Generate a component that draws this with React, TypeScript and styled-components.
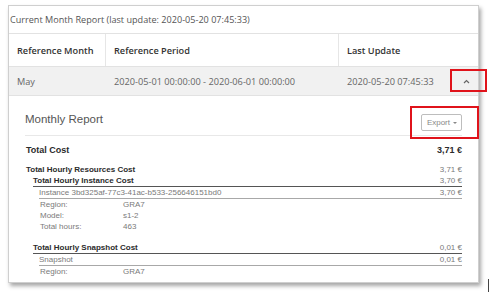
import React from 'react';
import styled, { createGlobalStyle } from 'styled-components';

const GlobalStyle = createGlobalStyle`
    html, body {
        margin: 0;
        padding: 0;
        background: #ffffff;
    }
`;

const Page = styled.div`
    position: relative;
    width: 500px;
    height: 292px;
    padding: 5px 0 0 8px;
    box-sizing: border-box;
    overflow: hidden;
`;

const Panel = styled.section`
    width: 471px;
    height: 278px;
    box-sizing: border-box;
    border: 1px solid #cfcfcf;
    background: #ffffff;
    box-shadow: 2px 3px 4px rgba(0, 0, 0, 0.35);
    display: flex;
    flex-direction: column;
    font-family: 'Open Sans', 'Liberation Sans', sans-serif;
`;

const PanelTitle = styled.div`
    height: 27px;
    display: flex;
    align-items: center;
    padding-left: 1px;
    font-size: 9.1px;
    color: #555;
    white-space: nowrap;
    border-bottom: 1px solid #e2e2e2;
`;

const Row = styled.div<{ shaded?: boolean; head?: boolean }>`
    display: grid;
    grid-template-columns: 97px 233px 1fr 30px;
    height: ${({ head }) => (head ? '32px' : '28px')};
    background: ${({ shaded }) => (shaded ? '#f1f1f1' : '#ffffff')};
    border-bottom: 1px solid #e2e2e2;
    font-size: 9.2px;
    white-space: nowrap;
    color: ${({ head }) => (head ? '#333' : '#666')};
    font-weight: ${({ head }) => (head ? 600 : 400)};
`;

const Cell = styled.div<{ divider?: boolean }>`
    display: flex;
    align-items: center;
    padding-left: 8px;
    border-right: ${({ divider }) => (divider ? '1px solid #e6e6e6' : 'none')};
`;

const CaretCell = styled.div`
    display: flex;
    align-items: center;
    justify-content: center;
    padding-left: 6px;
`;

const Report = styled.div`
    padding: 0 16px;
    font-family: 'Liberation Sans', Arial, sans-serif;
    display: flex;
    flex-direction: column;
`;

const ReportHeader = styled.div`
    display: flex;
    align-items: center;
    justify-content: space-between;
    padding: 12px 0 6px;
    border-bottom: 1px solid #e8e8e8;
`;

const ReportTitle = styled.h4`
    margin: 0;
    font-size: 11.5px;
    line-height: 20px;
    font-weight: 400;
    color: #555;
`;

const ExportButton = styled.button`
    margin-top: 6px;
    margin-bottom: -2px;
    height: 17px;
    padding: 0 4px 0 5px;
    border: 1px solid #bdbdbd;
    border-radius: 2px;
    background: #fff;
    font-family: 'Liberation Sans', Arial, sans-serif;
    font-size: 8px;
    color: #888;
    display: flex;
    align-items: center;
    gap: 3px;
`;

const Caret = styled.span`
    width: 0;
    height: 0;
    border-left: 2px solid transparent;
    border-right: 2px solid transparent;
    border-top: 2px solid #888;
`;

const Line = styled.div<{
    indent?: number;
    strong?: boolean;
    big?: boolean;
    rule?: 'dark' | 'light';
    top?: number;
}>`
    display: flex;
    justify-content: space-between;
    margin-left: ${({ indent }) => indent || 0}px;
    margin-top: ${({ top }) => top || 0}px;
    padding-left: ${({ indent }) => (indent ? 0 : 1)}px;
    font-size: ${({ big }) => (big ? '9px' : '8px')};
    line-height: ${({ big }) => (big ? '14px' : '11px')};
    font-weight: ${({ strong }) => (strong ? 700 : 400)};
    color: ${({ strong }) => (strong ? '#2b2b2b' : '#7a7a7a')};
    border-bottom: ${({ rule }) =>
        rule === 'dark' ? '1px solid #555' : rule === 'light' ? '1px solid #a8a8a8' : 'none'};
`;

const Amount = styled.span<{ strong?: boolean }>`
    font-weight: ${({ strong }) => (strong ? 700 : 400)};
    color: ${({ strong }) => (strong ? '#2b2b2b' : '#7a7a7a')};
`;

const Detail = styled.div`
    display: grid;
    grid-template-columns: 83px 1fr;
    margin-left: 15px;
    font-size: 8px;
    line-height: 11px;
    color: #7a7a7a;
`;

const Highlight = styled.div`
    position: absolute;
    border: 2px solid #e0131b;
    box-sizing: border-box;
`;

const CursorMark = styled.div`
    position: absolute;
    left: 488px;
    top: 279px;
    width: 1px;
    height: 13px;
    background: #444;
`;

function App() {
    return (
        <Page>
            <GlobalStyle />
            <Panel>
                <PanelTitle>Current Month Report (last update: 2020-05-20 07:45:33)</PanelTitle>
                <Row head>
                    <Cell divider>Reference Month</Cell>
                    <Cell divider>Reference Period</Cell>
                    <Cell>Last Update</Cell>
                    <Cell />
                </Row>
                <Row shaded>
                    <Cell>May</Cell>
                    <Cell>2020-05-01 00:00:00 - 2020-06-01 00:00:00</Cell>
                    <Cell>2020-05-20 07:45:33</Cell>
                    <CaretCell>
                        <svg width="7" height="5" viewBox="0 0 7 5">
                            <path d="M1 4 L3.5 1.5 L6 4" fill="none" stroke="#666" strokeWidth="1.2" />
                        </svg>
                    </CaretCell>
                </Row>
                <Report>
                    <ReportHeader>
                        <ReportTitle>Monthly Report</ReportTitle>
                        <ExportButton>
                            Export <Caret />
                        </ExportButton>
                    </ReportHeader>
                    <Line strong big top={7}>
                        <span>Total Cost</span>
                        <Amount strong>3,71 €</Amount>
                    </Line>
                    <Line strong top={7}>
                        <span>Total Hourly Resources Cost</span>
                        <Amount>3,71 €</Amount>
                    </Line>
                    <Line strong indent={8} rule="dark">
                        <span>Total Hourly Instance Cost</span>
                        <Amount>3,70 €</Amount>
                    </Line>
                    <Line indent={14} rule="light">
                        <span>Instance 3bd325af-77c3-41ac-b533-256646151bd0</span>
                        <Amount>3,70 €</Amount>
                    </Line>
                    <Detail>
                        <span>Region:</span>
                        <span>GRA7</span>
                        <span>Model:</span>
                        <span>s1-2</span>
                        <span>Total hours:</span>
                        <span>463</span>
                    </Detail>
                    <Line strong indent={8} rule="dark" top={10}>
                        <span>Total Hourly Snapshot Cost</span>
                        <Amount>0,01 €</Amount>
                    </Line>
                    <Line indent={14} rule="light">
                        <span>Snapshot</span>
                        <Amount>0,01 €</Amount>
                    </Line>
                    <Detail>
                        <span>Region:</span>
                        <span>GRA7</span>
                    </Detail>
                </Report>
            </Panel>
            <Highlight style={{ left: 450, top: 69, width: 37, height: 23 }} />
            <Highlight style={{ left: 410, top: 106, width: 69, height: 33 }} />
            <CursorMark />
        </Page>
    );
}

export default App;
